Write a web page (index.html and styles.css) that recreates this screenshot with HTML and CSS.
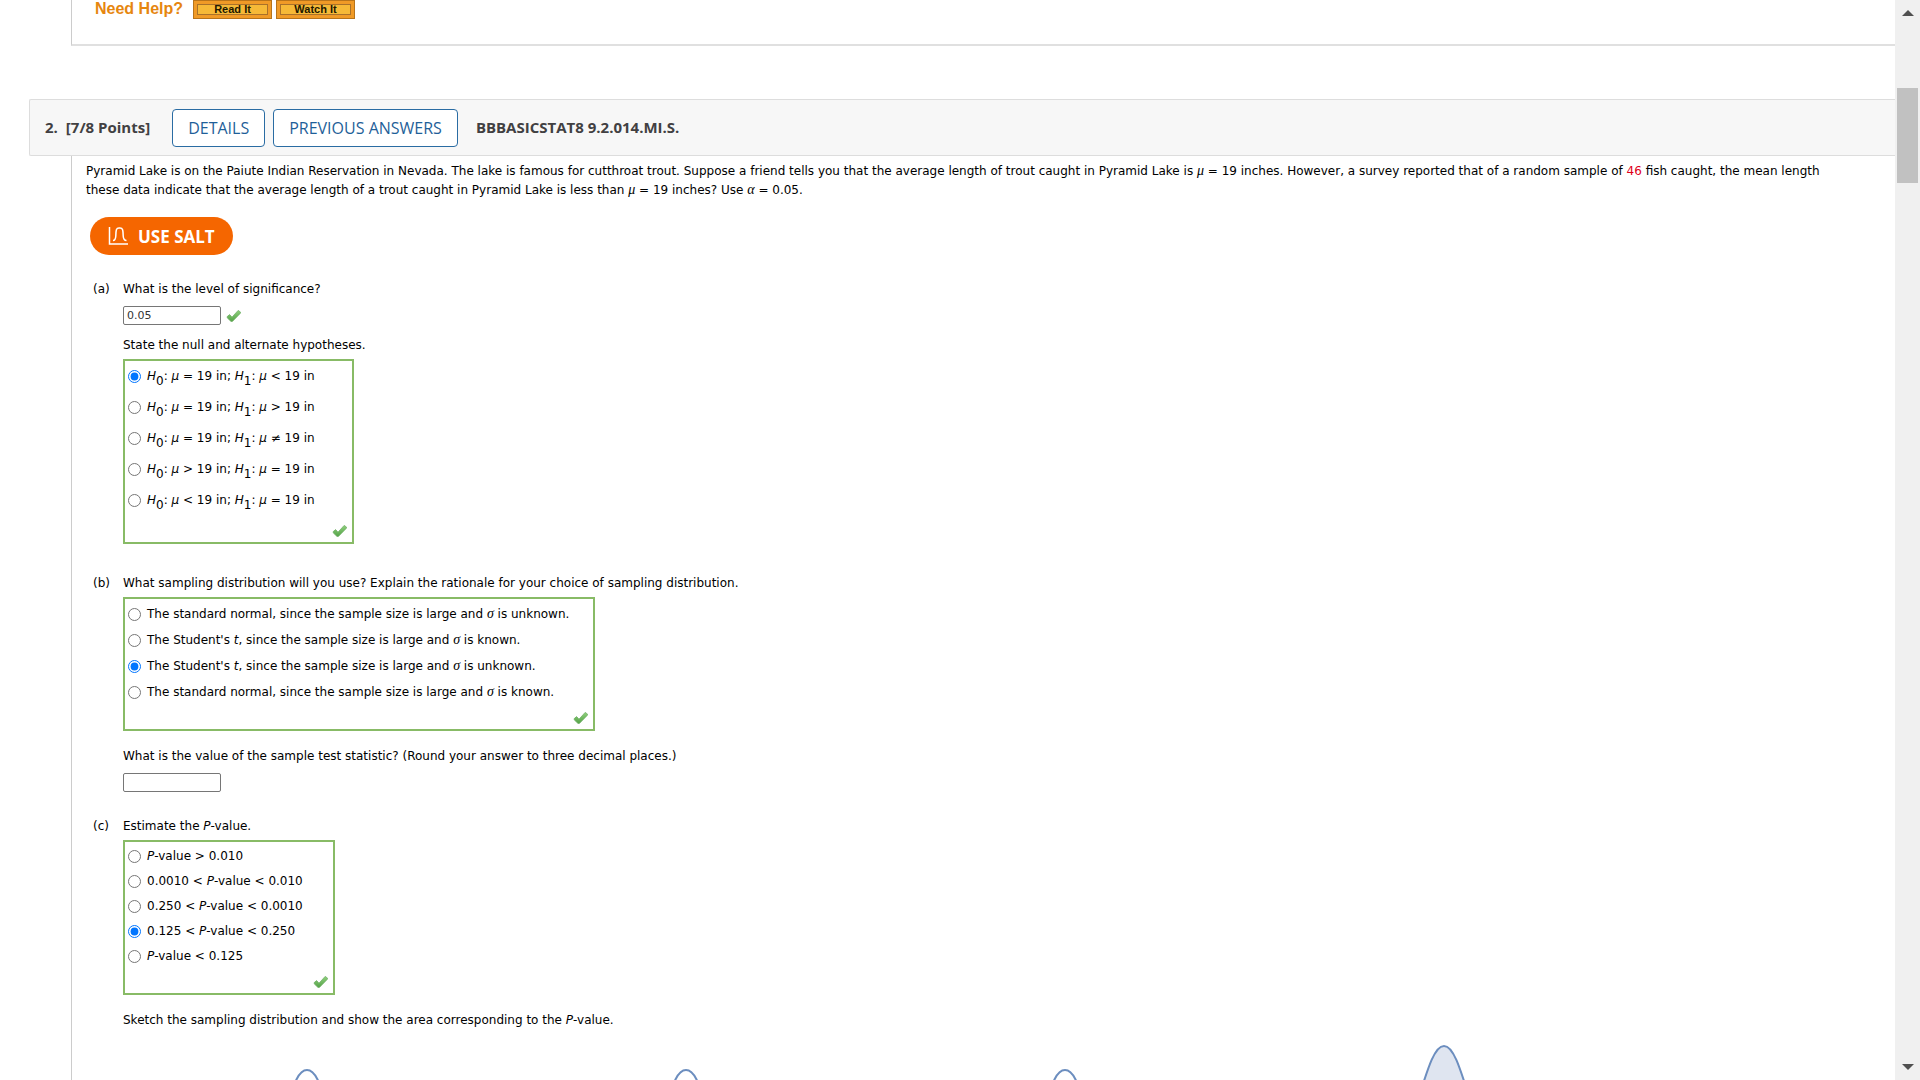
FILE: index.html
```html
<!DOCTYPE html>
<html lang="en">
<head>
    <meta charset="UTF-8">
    <meta name="viewport" content="width=device-width, initial-scale=1.0">
    <title>Homework - Question 2</title>
    <link rel="stylesheet" href="styles.css">
</head>
<body>
    <!-- shared icons -->
    <svg class="defs" width="0" height="0" aria-hidden="true">
        <linearGradient id="tick" x1="0" y1="0" x2="0" y2="1">
            <stop offset="0" stop-color="#8fd07c"/>
            <stop offset="1" stop-color="#55a348"/>
        </linearGradient>
        <symbol id="check" viewBox="0 0 16 14">
            <path d="M1.2 7.6 3.6 5.6 6 8.2 12.2 1.4 14.6 3.2 14.2 4.4 6.4 12.4 5 12.4 1.2 8.8Z" fill="url(#tick)" stroke="#6fae64" stroke-width=".8" stroke-linejoin="round"/>
        </symbol>
    </svg>

    <div class="screen">
        <main>
            <!-- end of question 1 -->
            <section class="previous">
                <strong class="need-help">Need Help?</strong>
                <button class="help-btn">Read It</button>
                <button class="help-btn">Watch It</button>
            </section>

            <!-- question 2 -->
            <header class="question-header">
                <span class="number">2.</span>
                <span class="points">[7/8 Points]</span>
                <button class="header-btn">DETAILS</button>
                <button class="header-btn">PREVIOUS ANSWERS</button>
                <h2>BBBASICSTAT8 9.2.014.MI.S.</h2>
            </header>

            <section class="question">
                <p class="intro">Pyramid Lake is on the Paiute Indian Reservation in Nevada. The lake is famous for cutthroat trout. Suppose a friend tells you that the average length of trout caught in Pyramid Lake is <i class="sym">μ</i> = 19 inches. However, a survey reported that of a random sample of <span class="red">46</span> fish caught, the mean length<br>
                these data indicate that the average length of a trout caught in Pyramid Lake is less than <i class="sym">μ</i> = 19 inches? Use <i class="sym">α</i> = 0.05.</p>

                <button class="salt">
                    <svg width="20" height="20" viewBox="0 0 20 20" fill="none" stroke="#fff" stroke-width="1.5" aria-hidden="true">
                        <path d="M1.5 1v17H20"/>
                        <path d="M5 14.500c2.200 0 2.600-1.500 2.800-4.500C8 4.500 8 2 11 2h1c3 0 3 2.500 3.200 8 .2 3 1 4.500 3.300 4.500"/>
                    </svg>
                    USE SALT
                </button>

                <div class="part">
                    <span>(a)</span>
                    <div>
                        <label class="prompt" for="level">What is the level of significance?</label>
                        <div class="answer">
                            <input type="text" id="level" value="0.05">
                            <svg class="check" role="img" aria-label="Correct"><use href="#check"/></svg>
                        </div>
                        <p class="prompt" id="q-hyp">State the null and alternate hypotheses.</p>
                        <div class="choices hypotheses" role="radiogroup" aria-labelledby="q-hyp">
                            <label><input type="radio" name="hyp" checked><span><i>H</i><sub>0</sub>: <i>μ</i> = 19 in; <i>H</i><sub>1</sub>: <i>μ</i> &lt; 19 in</span></label>
                            <label><input type="radio" name="hyp"><span><i>H</i><sub>0</sub>: <i>μ</i> = 19 in; <i>H</i><sub>1</sub>: <i>μ</i> &gt; 19 in</span></label>
                            <label><input type="radio" name="hyp"><span><i>H</i><sub>0</sub>: <i>μ</i> = 19 in; <i>H</i><sub>1</sub>: <i>μ</i> ≠ 19 in</span></label>
                            <label><input type="radio" name="hyp"><span><i>H</i><sub>0</sub>: <i>μ</i> &gt; 19 in; <i>H</i><sub>1</sub>: <i>μ</i> = 19 in</span></label>
                            <label><input type="radio" name="hyp"><span><i>H</i><sub>0</sub>: <i>μ</i> &lt; 19 in; <i>H</i><sub>1</sub>: <i>μ</i> = 19 in</span></label>
                            <svg class="check" role="img" aria-label="Correct"><use href="#check"/></svg>
                        </div>
                    </div>
                </div>

                <div class="part">
                    <span>(b)</span>
                    <div>
                        <p class="prompt" id="q-dist">What sampling distribution will you use? Explain the rationale for your choice of sampling distribution.</p>
                        <div class="choices distribution" role="radiogroup" aria-labelledby="q-dist">
                            <label><input type="radio" name="dist"><span>The standard normal, since the sample size is large and <i class="sym">σ</i> is unknown.</span></label>
                            <label><input type="radio" name="dist"><span>The Student's <i>t</i>, since the sample size is large and <i class="sym">σ</i> is known.</span></label>
                            <label><input type="radio" name="dist" checked><span>The Student's <i>t</i>, since the sample size is large and <i class="sym">σ</i> is unknown.</span></label>
                            <label><input type="radio" name="dist"><span>The standard normal, since the sample size is large and <i class="sym">σ</i> is known.</span></label>
                            <svg class="check" role="img" aria-label="Correct"><use href="#check"/></svg>
                        </div>
                        <label class="prompt" for="statistic">What is the value of the sample test statistic? (Round your answer to three decimal places.)</label>
                        <div class="answer">
                            <input type="text" id="statistic">
                        </div>
                    </div>
                </div>

                <div class="part">
                    <span>(c)</span>
                    <div>
                        <p class="prompt" id="q-pvalue">Estimate the <i>P</i>-value.</p>
                        <div class="choices pvalue" role="radiogroup" aria-labelledby="q-pvalue">
                            <label><input type="radio" name="pvalue"><span><i>P</i>-value &gt; 0.010</span></label>
                            <label><input type="radio" name="pvalue"><span>0.0010 &lt; <i>P</i>-value &lt; 0.010</span></label>
                            <label><input type="radio" name="pvalue"><span>0.250 &lt; <i>P</i>-value &lt; 0.0010</span></label>
                            <label><input type="radio" name="pvalue" checked><span>0.125 &lt; <i>P</i>-value &lt; 0.250</span></label>
                            <label><input type="radio" name="pvalue"><span><i>P</i>-value &lt; 0.125</span></label>
                            <svg class="check" role="img" aria-label="Correct"><use href="#check"/></svg>
                        </div>
                        <p class="prompt">Sketch the sampling distribution and show the area corresponding to the <i>P</i>-value.</p>

                        <div class="graphs">
                            <svg viewBox="0 0 368 200"><path d="M160 80C170 50 174 32 184 32S198 50 208 80"/></svg>
                            <svg viewBox="0 0 368 200"><path d="M160 80C170 50 174 32 184 32S198 50 208 80"/></svg>
                            <svg viewBox="0 0 368 200"><path d="M160 80C170 50 174 32 184 32S198 50 208 80"/></svg>
                            <svg viewBox="0 0 368 200"><path class="shaded" d="M152 80C168 30 174 8 184 8S200 30 216 80"/></svg>
                        </div>
                    </div>
                </div>
            </section>
        </main>

        <!-- window scrollbar -->
        <div class="scrollbar" aria-hidden="true">
            <svg width="12" height="6" viewBox="0 0 12 6"><path d="M0 6 6 0l6 6z"/></svg>
            <div class="track"><div class="thumb"></div></div>
            <svg width="12" height="6" viewBox="0 0 12 6"><path d="M0 0h12L6 6z"/></svg>
        </div>
    </div>
</body>
</html>
```

FILE: styles.css
```css
* {
    box-sizing: border-box;
}

body {
    margin: 0;
    background-color: #fff;
    color: #000;
    font-family: Verdana, "DejaVu Sans", sans-serif;
    font-size: 12px;
    line-height: 19px;
}

p, h2 {
    margin: 0;
}

button {
    cursor: pointer;
}

.defs {
    position: absolute;
}

.screen {
    display: flex;
    height: 100vh;
    overflow: hidden;
}

main {
    flex: 1;
    min-width: 0;
    overflow: hidden;
    padding-left: 29px;
}

/* PREVIOUS QUESTION */
.previous {
    display: flex;
    align-items: flex-start;
    gap: 4px;
    height: 46px;
    margin-left: 42px;
    padding-left: 23px;
    border-left: 1px solid #ccc;
    border-bottom: 2px solid #e0e0e0;
}

.need-help {
    margin-right: 6px;
    color: #e6860f;
    font: bold 16px/17px "Liberation Sans", Arial, sans-serif;
}

.help-btn {
    width: 79px;
    height: 19px;
    padding: 0;
    border: 1px solid #b8741a;
    background-color: #f6b937;
    box-shadow: inset 0 0 0 3px #f09a26, inset 0 0 0 4px #a9712a;
    color: #221800;
    font: bold 11px/17px "Liberation Sans", Arial, sans-serif;
}

/* QUESTION HEADER */
.question-header {
    display: flex;
    align-items: center;
    gap: 8px;
    height: 57px;
    margin-top: 53px;
    padding-left: 15px;
    border: 1px solid #ddd;
    border-right: 0;
    border-radius: 2px 0 0 2px;
    background-color: #f7f7f7;
    color: #414042;
    font-family: "Open Sans", sans-serif;
    font-size: 15px;
    font-weight: bold;
    white-space: nowrap;
}

.points {
    margin-right: 14px;
}

.header-btn {
    height: 38px;
    padding: 0 15px;
    border: 1px solid #2a6ca3;
    border-radius: 4px;
    background-color: #fff;
    color: #1f5f99;
    font: 16px "Open Sans", sans-serif;
}

.question-header h2 {
    margin-left: 10px;
    font-size: 15px;
    font-weight: bold;
}

/* QUESTION BODY */
.question {
    margin-left: 42px;
    padding: 6px 0 0 14px;
    border-left: 1px solid #ccc;
}

.intro {
    white-space: nowrap;
}

.sym {
    font-family: "Liberation Serif", serif;
    font-size: 14px;
    line-height: 1;
}

.red {
    color: #e0001b;
}

.salt {
    display: flex;
    align-items: center;
    gap: 10px;
    height: 38px;
    margin: 17px 0 25px 4px;
    padding: 0 18px;
    border: 0;
    border-radius: 19px;
    background-color: #f56600;
    color: #fff;
    font: bold 17px "Open Sans", sans-serif;
}

.part {
    display: grid;
    grid-template-columns: 30px 1fr;
    margin: 0 0 14px 7px;
}

.prompt {
    display: block;
}

.answer {
    display: flex;
    align-items: center;
    gap: 5px;
    height: 19px;
    margin: 7px 0 11px;
}

.answer input {
    width: 98px;
    height: 19px;
    padding: 0 3px;
    border: 1px solid #767676;
    border-radius: 2px;
    background-color: #fff;
    color: #333;
    font: 11px Verdana, "DejaVu Sans", sans-serif;
}

.check {
    width: 16px;
    height: 14px;
}

/* ANSWER CHOICES */
.choices {
    display: flex;
    flex-direction: column;
    width: fit-content;
    margin: 4px 0 16px;
    padding: 0 4px 4px 3px;
    border: 2px solid #88bb66;
}

.choices label {
    display: flex;
    align-items: center;
    gap: 6px;
    height: 25px;
}

.choices input {
    width: 13px;
    height: 13px;
    margin: 0;
}

.choices .check {
    align-self: flex-end;
    margin-top: 8px;
}

.choices sub {
    font-size: 12px;
    line-height: 0;
    vertical-align: -5px;
}

.hypotheses label {
    height: 31px;
    padding-right: 33px;
}

.distribution,
.pvalue {
    padding-top: 2px;
}

.distribution .check,
.pvalue .check {
    margin-top: 6px;
}

.distribution label {
    height: 26px;
    padding-right: 20px;
}

.pvalue label {
    padding-right: 26px;
}

/* SAMPLING DISTRIBUTION GRAPHS */
.graphs {
    display: flex;
    gap: 11px;
    margin-top: 8px;
}

.graphs svg {
    width: 368px;
    height: 200px;
    flex: none;
}

.graphs path {
    fill: none;
    stroke: #6c8ebf;
    stroke-width: 2;
}

.graphs .shaded {
    fill: #dfe5f0;
}

/* SCROLLBAR */
.scrollbar {
    display: flex;
    flex-direction: column;
    align-items: center;
    width: 25px;
    padding: 10px 0;
    background-color: #f0f0f0;
}

.scrollbar svg {
    fill: #505050;
}

.track {
    flex: 1;
    padding-top: 72px;
}

.thumb {
    width: 21px;
    height: 95px;
    background-color: #c1c1c1;
}
```
